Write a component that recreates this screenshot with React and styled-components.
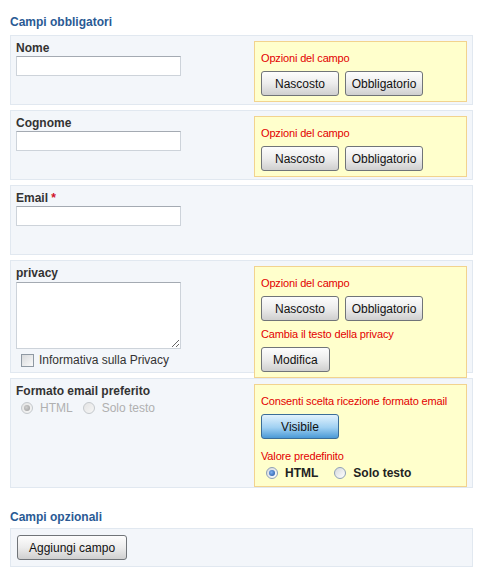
import React from 'react'
import styled, { createGlobalStyle, css } from 'styled-components'

const GlobalStyle = createGlobalStyle`
  body {
    margin: 0;
    background: #fff;
    font-family: 'Liberation Sans', Arial, sans-serif;
    font-size: 12px;
    color: #333;
  }
`

const Page = styled.div`
  padding: 15px 0 0 10px;
`

const SectionTitle = styled.h2`
  margin: ${({ $first }) => ($first ? '0 0 5px' : '22px 0 3px')};
  font-size: 12px;
  line-height: 15px;
  font-weight: bold;
  color: #2a5a94;
`

const Panel = styled.div`
  box-sizing: border-box;
  width: 463px;
  min-height: ${({ $compact }) => ($compact ? 'auto' : '70px')};
  display: flex;
  justify-content: space-between;
  align-items: flex-start;
  padding: ${({ $compact }) => ($compact ? '6px' : '5px 5px 0')};
  margin-bottom: 5px;
  background: #f3f6fa;
  border: 1px solid #e1e8f0;
`

const FieldColumn = styled.div`
  display: flex;
  flex-direction: column;
`

const FieldLabel = styled.label`
  font-weight: bold;
  line-height: 15px;
  color: #333;
`

const Required = styled.span`
  color: #d0102a;
`

const fieldBox = css`
  box-sizing: border-box;
  width: 165px;
  background: #fff;
  border: 1px solid #cdd3da;
  border-top-color: #a4aab2;
  font-family: inherit;
  font-size: 12px;
  margin: 0;
`

const TextInput = styled.input`
  ${fieldBox};
  height: 20px;
  padding: 0 3px;
`

const TextArea = styled.textarea`
  ${fieldBox};
  height: 67px;
  margin-top: 1px;
  padding: 2px 3px;
  resize: both;
`

const CheckRow = styled.div`
  display: flex;
  align-items: center;
  gap: 5px;
  height: 22px;
  padding-left: 5px;
`

const CheckBox = styled.span`
  box-sizing: border-box;
  width: 13px;
  height: 13px;
  border: 1px solid #8f99a3;
  background: linear-gradient(135deg, #d8dadc, #fafafa);
`

const RadioRow = styled.div`
  display: flex;
  align-items: center;
  height: ${({ $height }) => $height || 18}px;
  margin-top: ${({ $top }) => $top || 0}px;
  padding-left: 5px;
`

const RadioOption = styled.span`
  display: flex;
  align-items: center;
  gap: 7px;
  margin-right: ${({ $strong }) => ($strong ? 16 : 10)}px;
  font-weight: ${({ $strong }) => ($strong ? 'bold' : 'normal')};
  color: ${({ $disabled }) => ($disabled ? '#b0b0b0' : '#222')};
`

const RadioDot = styled.span`
  box-sizing: border-box;
  position: relative;
  width: 12px;
  height: 12px;
  border-radius: 50%;
  border: 1px solid ${({ $disabled }) => ($disabled ? '#c4c8cc' : '#8ea0b6')};
  background: ${({ $disabled }) =>
    $disabled
      ? 'linear-gradient(135deg, #e4e4e4, #f6f6f6)'
      : 'linear-gradient(135deg, #d6d9dd, #ffffff)'};

  &::after {
    content: '';
    display: ${({ $checked }) => ($checked ? 'block' : 'none')};
    position: absolute;
    left: 2px;
    top: 2px;
    width: 6px;
    height: 6px;
    border-radius: 50%;
    background: ${({ $disabled }) =>
      $disabled
        ? 'radial-gradient(circle at 40% 40%, #d0d0d0, #9a9a9a)'
        : 'radial-gradient(circle at 40% 40%, #7fb0f0, #1c4f9e)'};
  }
`

const OptionsBox = styled.div`
  box-sizing: border-box;
  width: 213px;
  padding: 9px 6px 5px;
  margin-bottom: ${({ $overhang }) => ($overhang ? '-6px' : '0')};
  background: #ffffcc;
  border: 1px solid #f2d38e;
`

const OptionsLabel = styled.div`
  margin-top: ${({ $space }) => $space || 0}px;
  font-size: 11px;
  line-height: 14px;
  letter-spacing: -0.15px;
  color: #e30000;
`

const ButtonRow = styled.div`
  display: flex;
  gap: 6px;
  margin-top: 6px;
`

const Button = styled.button`
  box-sizing: border-box;
  height: 25px;
  width: ${({ $width }) => ($width ? `${$width}px` : 'auto')};
  padding: ${({ $width }) => ($width ? '0' : '0 11px')};
  border: 1px solid #707478;
  border-radius: 3px;
  font-family: 'Liberation Sans', Arial, sans-serif;
  font-size: 12px;
  color: #111;
  white-space: nowrap;
  background: ${({ $active }) =>
    $active
      ? 'linear-gradient(#e2f2fd, #9fd0f2 55%, #4a9ad6)'
      : 'linear-gradient(#fdfdfd, #ececec 50%, #cfcfcf)'};
  border-color: ${({ $active }) => ($active ? '#3b6d98' : '#707478')};
  cursor: pointer;
`

const FieldOptions = ({ children, overhang }) => (
  <OptionsBox $overhang={overhang}>
    <OptionsLabel>Opzioni del campo</OptionsLabel>
    <ButtonRow>
      <Button $width={78}>Nascosto</Button>
      <Button $width={78}>Obbligatorio</Button>
    </ButtonRow>
    {children}
  </OptionsBox>
)

const Radio = ({ label, checked, disabled, strong }) => (
  <RadioOption $disabled={disabled} $strong={strong}>
    <RadioDot $checked={checked} $disabled={disabled} />
    {label}
  </RadioOption>
)

const App = () => (
  <Page>
    <GlobalStyle />
    <SectionTitle $first>Campi obbligatori</SectionTitle>

    <Panel>
      <FieldColumn>
        <FieldLabel>Nome</FieldLabel>
        <TextInput />
      </FieldColumn>
      <FieldOptions />
    </Panel>

    <Panel>
      <FieldColumn>
        <FieldLabel>Cognome</FieldLabel>
        <TextInput />
      </FieldColumn>
      <FieldOptions />
    </Panel>

    <Panel>
      <FieldColumn>
        <FieldLabel>
          Email <Required>*</Required>
        </FieldLabel>
        <TextInput />
      </FieldColumn>
    </Panel>

    <Panel>
      <FieldColumn>
        <FieldLabel>privacy</FieldLabel>
        <TextArea />
        <CheckRow>
          <CheckBox />
          Informativa sulla Privacy
        </CheckRow>
      </FieldColumn>
      <FieldOptions overhang>
        <OptionsLabel $space={6}>Cambia il testo della privacy</OptionsLabel>
        <ButtonRow>
          <Button>Modifica</Button>
        </ButtonRow>
      </FieldOptions>
    </Panel>

    <Panel>
      <FieldColumn>
        <FieldLabel>Formato email preferito</FieldLabel>
        <RadioRow>
          <Radio label="HTML" checked disabled />
          <Radio label="Solo testo" disabled />
        </RadioRow>
      </FieldColumn>
      <OptionsBox>
        <OptionsLabel>Consenti scelta ricezione formato email</OptionsLabel>
        <ButtonRow>
          <Button $width={78} $active>Visibile</Button>
        </ButtonRow>
        <OptionsLabel $space={10}>Valore predefinito</OptionsLabel>
        <RadioRow $top={2} $height={16}>
          <Radio label="HTML" checked strong />
          <Radio label="Solo testo" strong />
        </RadioRow>
      </OptionsBox>
    </Panel>

    <SectionTitle>Campi opzionali</SectionTitle>
    <Panel $compact>
      <Button>Aggiungi campo</Button>
    </Panel>
  </Page>
)

export default App
